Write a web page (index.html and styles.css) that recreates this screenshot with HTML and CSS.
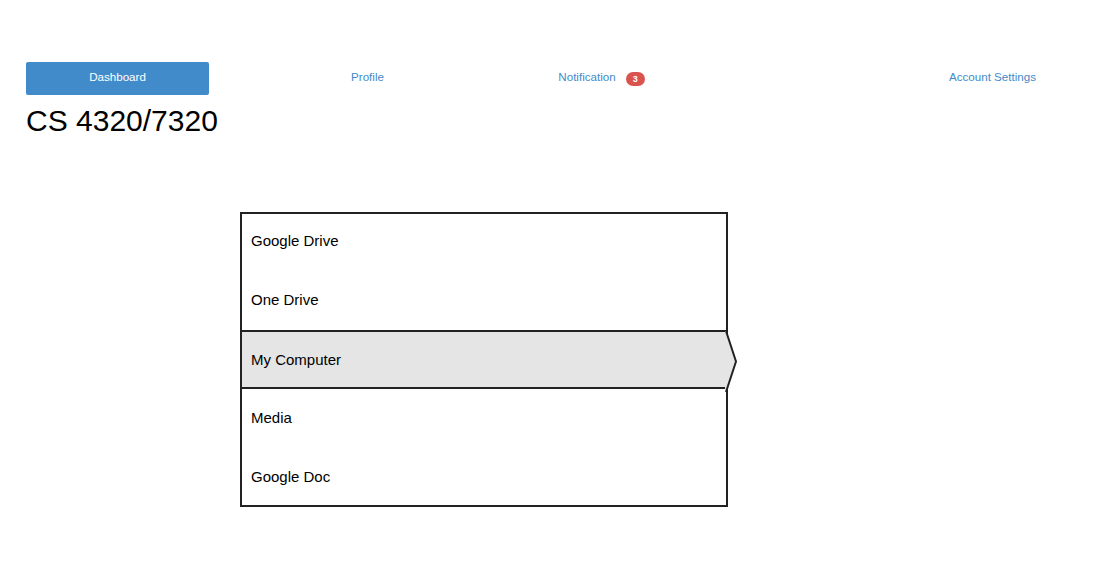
FILE: index.html
```html
<!DOCTYPE html>
<html>
<head>
<meta charset="utf-8">
<link rel="stylesheet" href="styles.css">
</head>
<body>
<div class="page">
  <nav class="nav">
    <a class="nav-item active">Dashboard</a>
    <a class="nav-item profile">Profile</a>
    <a class="nav-item notif">Notification <span class="badge">3</span></a>
    <a class="nav-item account">Account Settings</a>
  </nav>
  <h1 class="title">CS 4320/7320</h1>
  <div class="list">
    <div class="row first">Google Drive</div>
    <div class="row">One Drive</div>
    <div class="row selected">My Computer
      <svg class="arrow" width="14" height="63" viewBox="0 0 14 63"><polygon points="0,1 1,1 11,31.5 1,62 0,62" fill="#e5e5e5"/><polyline points="1,1 11,31.5 1,62" fill="none" stroke="#222" stroke-width="2"/></svg>
    </div>
    <div class="row">Media</div>
    <div class="row last">Google Doc</div>
  </div>
</div>
</body>
</html>
```
FILE: styles.css
```css
html, body {
  margin: 0;
  padding: 0;
  background: #fff;
  font-family: "Liberation Sans", Arial, sans-serif;
}
.page {
  padding: 62px 26px 0 26px;
}
.nav {
  display: flex;
  align-items: flex-start;
  height: 33px;
}
.nav-item {
  font-size: 11.6px;
  color: #428bca;
  text-align: center;
  line-height: 29px;
  height: 29px;
  padding-bottom: 4px;
  text-decoration: none;
}
.nav-item.active {
  width: 183px;
  background: #428bca;
  color: #fff;
  border-radius: 2px;
}
.nav-item.profile {
  width: 317px;
}
.nav-item.notif {
  width: 151px;
  display: flex;
  justify-content: center;
  align-items: center;
  gap: 10px;
}
.badge {
  display: inline-block;
  background: #d9534f;
  color: #fff;
  font-size: 9px;
  font-weight: bold;
  line-height: 14px;
  height: 14px;
  min-width: 19px;
  border-radius: 7px;
  text-align: center;
  margin-top: 4px;
}
.nav-item.account {
  margin-left: auto;
  margin-right: 38px;
}
.title {
  margin: 8px 0 0 0;
  font-size: 30px;
  font-weight: normal;
  line-height: 36px;
  color: #000;
}
.list {
  margin: 73px 0 0 214px;
  width: 484px;
  border: 2px solid #222;
  display: flex;
  flex-direction: column;
}
.row {
  position: relative;
  height: 59px;
  box-sizing: border-box;
  padding-left: 9px;
  padding-bottom: 2px;
  display: flex;
  align-items: center;
  font-size: 15px;
  color: #000;
}
.row.first {
  margin-top: -2px;
}
.row.last {
  margin-bottom: -2px;
}
.row.selected {
  background: #e5e5e5;
  border-top: 2px solid #222;
  border-bottom: 2px solid #222;
  padding-bottom: 0;
}
.arrow {
  position: absolute;
  right: -13px;
  top: -2px;
}
```
